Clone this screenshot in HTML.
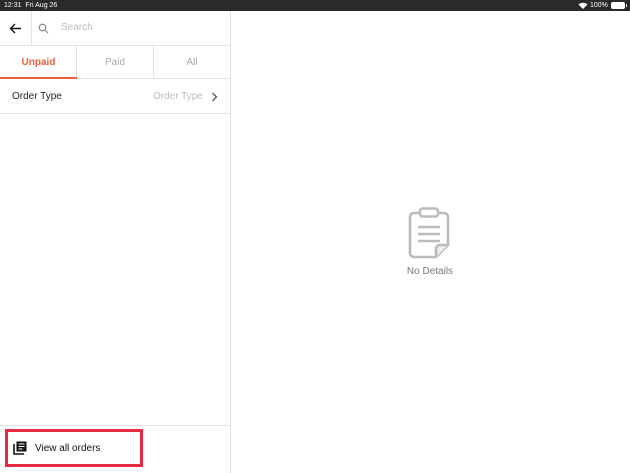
<!DOCTYPE html>
<html><head><meta charset="utf-8"><style>
*{box-sizing:border-box;margin:0;padding:0}
body{width:630px;height:473px;overflow:hidden;background:#fff;font-family:"Liberation Sans",sans-serif;position:relative}
.sb{position:absolute;left:0;top:0;width:630px;height:11px;background:#2a2a2c;color:#fff;font-size:7px;line-height:11px}
.left{position:absolute;left:0;top:11px;width:231px;height:462px;border-right:1px solid #e2e2e2}
.abs{position:absolute}
</style></head><body>
<div class="sb"><span class="abs" style="left:4px">12:31&nbsp;&nbsp;Fri Aug 26</span>
<span class="abs" style="left:590px">100%</span>
<svg class="abs" style="left:578px;top:2px" width="10" height="7" viewBox="0 0 10 7"><path d="M0.5 2.5 A6.5 6.5 0 0 1 9.5 2.5 L5 7Z" fill="#fff"/></svg>
<div class="abs" style="left:611px;top:2px;width:14px;height:7px;background:#fff;border-radius:2px"></div>
<div class="abs" style="left:626px;top:4px;width:1px;height:3px;background:#fff"></div>
</div>
<div class="left">
 <div class="abs" style="left:0;top:0;width:230px;height:35px;border-bottom:1px solid #e2e2e2"></div>
 <svg class="abs" style="left:9px;top:12px" width="13" height="11" viewBox="0 0 13 11"><path d="M12 5.5H1.5M6 1L1.5 5.5 6 10" stroke="#111" stroke-width="1.4" fill="none"/></svg>
 <div class="abs" style="left:31px;top:0;width:1px;height:35px;background:#e2e2e2"></div>
 <svg class="abs" style="left:38px;top:12px" width="11" height="11" viewBox="0 0 11 11"><circle cx="4.5" cy="4.5" r="3.3" stroke="#888" stroke-width="1.2" fill="none"/><path d="M7 7l3 3" stroke="#888" stroke-width="1.2"/></svg>
 <div class="abs" style="left:61px;top:11px;font-size:10px;color:#bbb">Search</div>
 <div class="abs" style="left:0;top:35px;width:230px;height:33px;border-bottom:1px solid #e2e2e2"></div>
 <div class="abs" style="left:76px;top:35px;width:1px;height:33px;background:#e2e2e2"></div>
 <div class="abs" style="left:153px;top:35px;width:1px;height:33px;background:#e2e2e2"></div>
 <div class="abs" style="left:0;top:66px;width:77px;height:2px;background:#e8603c"></div>
 <div class="abs" style="left:0;top:46px;width:77px;text-align:center;font-size:10px;font-weight:bold;color:#e8603c">Unpaid</div>
 <div class="abs" style="left:77px;top:46px;width:76px;text-align:center;font-size:10px;color:#aaa">Paid</div>
 <div class="abs" style="left:154px;top:46px;width:76px;text-align:center;font-size:10px;color:#aaa">All</div>
 <div class="abs" style="left:0;top:68px;width:230px;height:35px;border-bottom:1px solid #e2e2e2"></div>
 <div class="abs" style="left:12px;top:80px;font-size:10px;color:#222;font-weight:500">Order Type</div>
 <div class="abs" style="left:153px;top:80px;font-size:10px;color:#bbb">Order Type</div>
 <svg class="abs" style="left:211px;top:81px" width="7" height="10" viewBox="0 0 7 10"><path d="M1.5 1l4 4-4 4" stroke="#555" stroke-width="1.3" fill="none"/></svg>
 <div class="abs" style="left:0;top:414px;width:230px;height:1px;background:#e2e2e2"></div>
 <div class="abs" style="left:5px;top:418px;width:138px;height:38px;border:3px solid #e8293f"></div>
 <svg class="abs" style="left:13px;top:430px" width="14" height="14" viewBox="0 0 14 14"><path d="M1 3v10h10" stroke="#111" stroke-width="1.6" fill="none"/><rect x="3.5" y="0.5" width="10" height="10" fill="#111"/><path d="M5.5 3h6M5.5 5.5h6M5.5 8h4" stroke="#fff" stroke-width="1"/></svg>
 <div class="abs" style="left:35px;top:432px;font-size:10px;color:#111;font-weight:500">View all orders</div>
</div>
<svg class="abs" style="left:405px;top:205px" width="48" height="56" viewBox="0 0 48 56">
<path d="M14 8H9a4 4 0 0 0-4 4v36a4 4 0 0 0 4 4h22l12-12V12a4 4 0 0 0-4-4h-5" stroke="#bbb" stroke-width="2.6" fill="none"/>
<rect x="15" y="3.5" width="18" height="8" rx="2.5" stroke="#bbb" stroke-width="2.6" fill="#fff"/>
<path d="M13 22h22M13 29h22M13 36h22" stroke="#bbb" stroke-width="2.6"/>
<path d="M31 52V44a4 4 0 0 1 4-4h8" stroke="#bbb" stroke-width="2.6" fill="#eee"/>
</svg>
<div class="abs" style="left:380px;top:266px;width:100px;text-align:center;font-size:10px;color:#777">No Details</div>
</body></html>
